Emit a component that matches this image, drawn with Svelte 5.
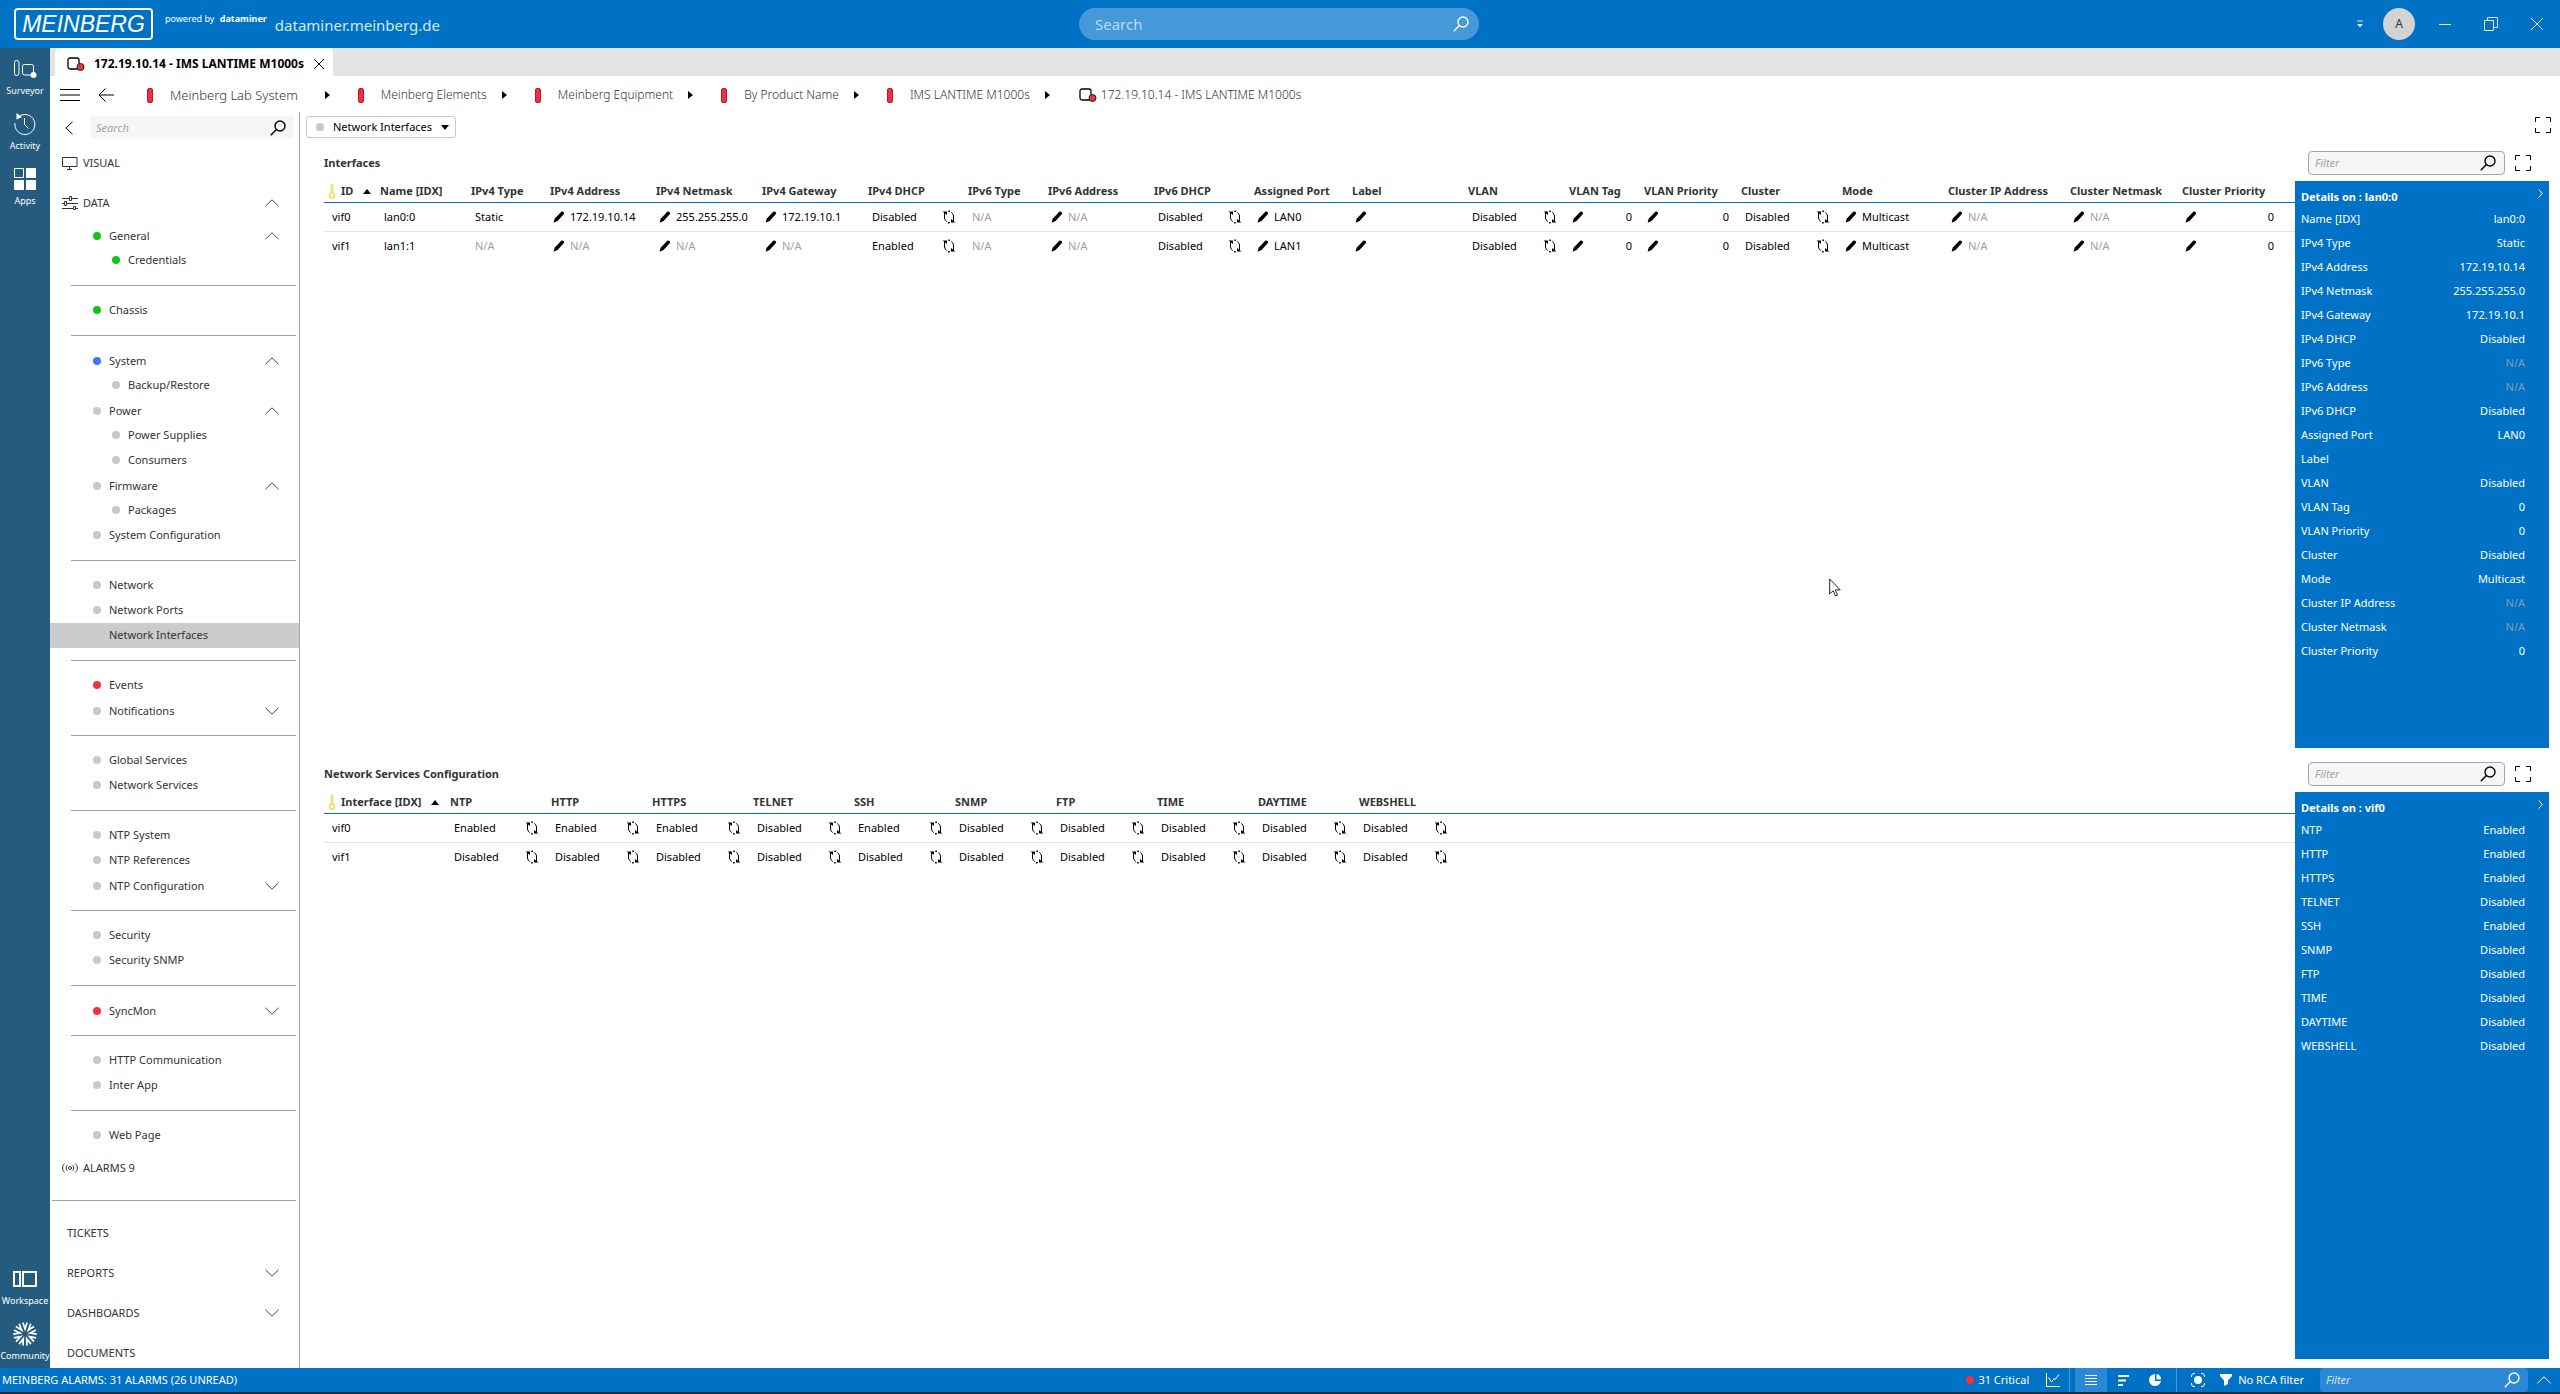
<script>
	let selected = $state('Network Interfaces');

	const crumbs = [
		{ label: 'Meinberg Lab System', large: true },
		{ label: 'Meinberg Elements' },
		{ label: 'Meinberg Equipment' },
		{ label: 'By Product Name' },
		{ label: 'IMS LANTIME M1000s' }
	];

	// null is a divider
	const pages = [
		{ label: 'General', color: 'green', open: true },
		{ label: 'Credentials', color: 'green', child: true },
		null,
		{ label: 'Chassis', color: 'green' },
		null,
		{ label: 'System', color: 'blue', open: true },
		{ label: 'Backup/Restore', child: true },
		{ label: 'Power', open: true },
		{ label: 'Power Supplies', child: true },
		{ label: 'Consumers', child: true },
		{ label: 'Firmware', open: true },
		{ label: 'Packages', child: true },
		{ label: 'System Configuration' },
		null,
		{ label: 'Network' },
		{ label: 'Network Ports' },
		{ label: 'Network Interfaces' },
		null,
		{ label: 'Events', color: 'red' },
		{ label: 'Notifications', open: false },
		null,
		{ label: 'Global Services' },
		{ label: 'Network Services' },
		null,
		{ label: 'NTP System' },
		{ label: 'NTP References' },
		{ label: 'NTP Configuration', open: false },
		null,
		{ label: 'Security' },
		{ label: 'Security SNMP' },
		null,
		{ label: 'SyncMon', color: 'red', open: false },
		null,
		{ label: 'HTTP Communication' },
		{ label: 'Inter App' },
		null,
		{ label: 'Web Page' }
	];

	const cards = [
		{ label: 'TICKETS' },
		{ label: 'REPORTS', more: true },
		{ label: 'DASHBOARDS', more: true },
		{ label: 'DOCUMENTS' }
	];

	// kind: edit = pencil in front, toggle = refresh at the end, number = pencil + right aligned
	const interfaceColumns = [
		{ label: 'ID', width: 52, key: true },
		{ label: 'Name [IDX]', width: 91 },
		{ label: 'IPv4 Type', width: 79 },
		{ label: 'IPv4 Address', width: 106, kind: 'edit' },
		{ label: 'IPv4 Netmask', width: 106, kind: 'edit' },
		{ label: 'IPv4 Gateway', width: 106, kind: 'edit' },
		{ label: 'IPv4 DHCP', width: 100, kind: 'toggle' },
		{ label: 'IPv6 Type', width: 80 },
		{ label: 'IPv6 Address', width: 106, kind: 'edit' },
		{ label: 'IPv6 DHCP', width: 100, kind: 'toggle' },
		{ label: 'Assigned Port', width: 98, kind: 'edit' },
		{ label: 'Label', width: 116, kind: 'edit' },
		{ label: 'VLAN', width: 101, kind: 'toggle' },
		{ label: 'VLAN Tag', width: 75, kind: 'number' },
		{ label: 'VLAN Priority', width: 97, kind: 'number' },
		{ label: 'Cluster', width: 101, kind: 'toggle' },
		{ label: 'Mode', width: 106, kind: 'edit' },
		{ label: 'Cluster IP Address', width: 122, kind: 'edit' },
		{ label: 'Cluster Netmask', width: 112, kind: 'edit' },
		{ label: 'Cluster Priority', width: 104, kind: 'number' }
	];

	const interfaceRows = [
		['vif0', 'lan0:0', 'Static', '172.19.10.14', '255.255.255.0', '172.19.10.1', 'Disabled', 'N/A', 'N/A', 'Disabled', 'LAN0', '', 'Disabled', '0', '0', 'Disabled', 'Multicast', 'N/A', 'N/A', '0'],
		['vif1', 'lan1:1', 'N/A', 'N/A', 'N/A', 'N/A', 'Enabled', 'N/A', 'N/A', 'Disabled', 'LAN1', '', 'Disabled', '0', '0', 'Disabled', 'Multicast', 'N/A', 'N/A', '0']
	];

	const serviceColumns = [
		{ label: 'Interface [IDX]', width: 122, key: true },
		...['NTP', 'HTTP', 'HTTPS', 'TELNET', 'SSH', 'SNMP', 'FTP', 'TIME', 'DAYTIME', 'WEBSHELL'].map(
			(label) => ({ label, width: 101, kind: 'toggle' })
		)
	];

	const serviceRows = [
		['vif0', 'Enabled', 'Enabled', 'Enabled', 'Disabled', 'Enabled', 'Disabled', 'Disabled', 'Disabled', 'Disabled', 'Disabled'],
		['vif1', 'Disabled', 'Disabled', 'Disabled', 'Disabled', 'Disabled', 'Disabled', 'Disabled', 'Disabled', 'Disabled', 'Disabled']
	];

	const sections = [
		{ id: 'interfaces', title: 'Interfaces', subject: 'lan0:0', columns: interfaceColumns, rows: interfaceRows },
		{ id: 'services', title: 'Network Services Configuration', subject: 'vif0', columns: serviceColumns, rows: serviceRows }
	];

	const rays = Array.from({ length: 9 }, (_, i) => i * 40);
</script>

{#snippet magnifier()}
	<svg class="magnifier" viewBox="0 0 16 16" width="16" height="16" aria-hidden="true">
		<circle cx="10" cy="6" r="5" />
		<path d="M6.4 9.6 .8 15.2" />
	</svg>
{/snippet}

{#snippet chevron(up)}
	<svg class="chevron" viewBox="0 0 14 8" width="14" height="8" aria-hidden="true">
		<path d={up ? 'M.5 7.2 7 .8l6.5 6.4' : 'M.5.8 7 7.2 13.5.8'} />
	</svg>
{/snippet}

{#snippet expand()}
	<svg class="expand" viewBox="0 0 16 16" width="16" height="16" aria-hidden="true">
		<path d="M.5 5V.5H5M11 .5h4.5V5M15.5 11v4.5H11M5 15.5H.5V11" />
	</svg>
{/snippet}

{#snippet element()}
	<svg class="element" viewBox="0 0 18 14" width="18" height="14" aria-hidden="true">
		<rect x="1" y="1" width="11" height="11" rx="2" />
		<circle cx="13.5" cy="10" r="3.5" />
	</svg>
{/snippet}

{#snippet pencil()}
	<svg class="pencil" viewBox="0 0 12 12" width="12" height="12" aria-hidden="true">
		<path d="M8.3.8C9.4-.2 11.9 1.4 10.9 2.9L4.6 9.9.6 11.7 1.6 7.7z" />
	</svg>
{/snippet}

{#snippet refresh()}
	<svg class="refresh" viewBox="0 0 14 14" width="14" height="14" aria-hidden="true">
		<path class="line" d="M2.5 3v5q0 2 2.3 3.6M11.5 11V6q0-2-2.3-3.6" />
		<path d="M.5 1.5h4.5v3.5zM13.5 12.5H9V9z" />
		<path d="M6.3.5h1.6v1.6H6.3zM6.1 11.9h1.6v1.6H6.1z" />
	</svg>
{/snippet}

<div class="app">
	<header class="titlebar">
		<div class="brand">
			<span class="logo">MEINBERG</span>
			<span class="powered">powered by <b>dataminer</b></span>
			<span class="host">dataminer.meinberg.de</span>
		</div>
		<div class="global-search">
			<input type="text" placeholder="Search" aria-label="Search" />
			{@render magnifier()}
		</div>
		<div class="window-controls">
			<button class="quick" aria-label="Quick menu">
				<svg viewBox="0 0 6 8" width="6" height="8"><path d="M0 .5h6v1H0zM0 4h6L3 7.5z" /></svg>
			</button>
			<button class="avatar">A</button>
			<button aria-label="Minimize">
				<svg viewBox="0 0 14 14" width="14" height="14"><path d="M1 7.5h12" /></svg>
			</button>
			<button aria-label="Restore">
				<svg viewBox="0 0 14 14" width="14" height="14"><path d="M.5 3.5h9v10h-9zM3.5 3.5v-3h10v10h-4" /></svg>
			</button>
			<button aria-label="Close">
				<svg viewBox="0 0 14 14" width="14" height="14"><path d="m1 1 12 12M13 1 1 13" /></svg>
			</button>
		</div>
	</header>

	<div class="body">
		<nav class="rail" aria-label="Main">
			<button>
				<svg viewBox="0 0 24 24" width="24" height="24">
					<rect x="1.5" y="3.5" width="4.5" height="15" rx="2.2" />
					<rect x="9.5" y="7.5" width="11" height="10.5" rx="2" />
					<circle class="solid" cx="20.5" cy="18" r="3" />
				</svg>
				Surveyor
			</button>
			<button>
				<svg viewBox="0 0 24 24" width="24" height="24">
					<path d="M5.5 4.8A10 10 0 1 1 2 11M11.5 6v6.5l4 4" />
					<path class="solid" d="M3.5 1v6.5L9 5z" />
				</svg>
				Activity
			</button>
			<button>
				<svg viewBox="0 0 24 24" width="24" height="24">
					<rect x="1.5" y="1.5" width="9" height="9" />
					<path class="solid" d="M13 1h10v10H13zM1 13h10v10H1zM13 13h10v10H13z" />
				</svg>
				Apps
			</button>
			<button class="push">
				<svg viewBox="0 0 24 24" width="24" height="24">
					<rect class="thick" x="1" y="5" width="6" height="14" />
					<rect class="thick" x="10" y="5" width="13" height="14" />
				</svg>
				Workspace
			</button>
			<button>
				<svg viewBox="0 0 28 28" width="26" height="24">
					{#each rays as angle}
						<path class="thick" transform="rotate({angle} 14 14)" d="M11.500.5 14 8l2.500-7.500" />
					{/each}
				</svg>
				Community
			</button>
		</nav>

		<div class="workspace">
			<div class="tabs">
				<div class="tab">
					{@render element()}
					<span>172.19.10.14 - IMS LANTIME M1000s</span>
					<button aria-label="Close tab">
						<svg viewBox="0 0 12 12" width="12" height="12"><path d="m1 1 10 10M11 1 1 11" /></svg>
					</button>
				</div>
			</div>

			<div class="crumbs">
				<button aria-label="Menu">
					<svg viewBox="0 0 20 12" width="20" height="12"><path d="M0 .5h20M0 6h20M0 11.5h20" /></svg>
				</button>
				<button class="back" aria-label="Back">
					<svg viewBox="0 0 16 14" width="16" height="14"><path d="M16 7H1M7.5.5 1 7l6.5 6.5" /></svg>
				</button>
				{#each crumbs as crumb}
					<a href="#view" class:large={crumb.large}><i class="level"></i>{crumb.label}</a>
					<svg class="next" viewBox="0 0 5 8" width="5" height="8"><path d="M0 0v8l5-4z" /></svg>
				{/each}
				<a href="#element" class="current">{@render element()}172.19.10.14 - IMS LANTIME M1000s</a>
			</div>

			<div class="columns">
				<nav class="pages" aria-label="Card pages">
					<div class="page-search">
						<button aria-label="Collapse">
							<svg viewBox="0 0 8 14" width="8" height="14"><path d="M7.5.8 1 7l6.5 6.2" /></svg>
						</button>
						<div class="field">
							<input type="text" placeholder="Search" aria-label="Search pages" />
							{@render magnifier()}
						</div>
					</div>

					<button class="card">
						<svg viewBox="0 0 16 14" width="16" height="14"><path d="M.5 1.5h14.5v9H.5zM7.5 10.5v2.5M5 13.5h5" /></svg>
						VISUAL
					</button>
					<button class="card">
						<svg viewBox="0 0 16 14" width="16" height="14">
							<path d="M0 2.5h7M10 2.5h6M0 7.5h2M5 7.5h11M0 12.5h11M14 12.5h2M7.5.5h2v4h-2zM2.5 5.5h2v4h-2zM11.5 10.5h2v3h-2z" />
						</svg>
						DATA
						{@render chevron(true)}
					</button>

					{#each pages as page}
						{#if page}
							<button
								class="page"
								class:child={page.child}
								class:group={page.open !== undefined}
								class:selected={selected === page.label}
								onclick={() => (selected = page.label)}
							>
								<i class="dot {page.color ?? 'gray'}"></i>
								{page.label}
								{#if page.open !== undefined}{@render chevron(page.open)}{/if}
							</button>
						{:else}
							<div class="divider"></div>
						{/if}
					{/each}

					<button class="card">
						<svg viewBox="0 0 16 14" width="16" height="14">
							<circle cx="8" cy="7" r="1.5" />
							<path d="M5.2 4.2c-1.4 1.7-1.4 3.9 0 5.6M10.8 4.2c1.4 1.7 1.4 3.9 0 5.6M2.5 2.5C0 5 0 9 2.5 11.5M13.5 2.5C16 5 16 9 13.5 11.5" />
						</svg>
						ALARMS 9
					</button>
					<div class="divider wide"></div>
					{#each cards as card}
						<button class="card plain">
							{card.label}
							{#if card.more}{@render chevron(false)}{/if}
						</button>
					{/each}
				</nav>

				<main>
					<div class="toolbar">
						<button class="page-picker">
							<i class="dot gray"></i>
							Network Interfaces
							<svg viewBox="0 0 8 5" width="8" height="5"><path d="M0 0h8L4 5z" /></svg>
						</button>
						<button class="full" aria-label="Full screen">{@render expand()}</button>
					</div>

					{#each sections as section (section.id)}
						<section>
							<div class="section-head">
								<h2>{section.title}</h2>
								<div class="field">
									<input type="text" placeholder="Filter" aria-label="Filter {section.title}" />
									{@render magnifier()}
								</div>
								<button aria-label="Expand {section.title}">{@render expand()}</button>
							</div>
							<div class="section-body">
								<div class="grid">
									<table>
										<colgroup>
											{#each section.columns as column}
												<col style="width: {column.width}px" />
											{/each}
											<col />
										</colgroup>
										<thead>
											<tr>
												{#each section.columns as column}
													<th>
														{#if column.key}
															<div>
																<svg class="key-icon" viewBox="0 0 8 16" width="8" height="16">
																	<path d="M2.5 1.5Q4-.5 5.5 1.5V10h-3z" />
																	<circle cx="4" cy="12.5" r="2.5" />
																</svg>
																{column.label}
																<svg class="sort" viewBox="0 0 8 5" width="8" height="5"><path d="M0 5h8L4 0z" /></svg>
															</div>
														{:else}
															{column.label}
														{/if}
													</th>
												{/each}
												<td></td>
											</tr>
										</thead>
										<tbody>
											{#each section.rows as row}
												<tr>
													{#each row as value, i}
														<td class:na={value === 'N/A'}>
															<div class={section.columns[i].kind}>
																{#if ['edit', 'number'].includes(section.columns[i].kind)}{@render pencil()}{/if}
																<span>{value}</span>
																{#if section.columns[i].kind === 'toggle'}{@render refresh()}{/if}
															</div>
														</td>
													{/each}
													<td></td>
												</tr>
											{/each}
										</tbody>
									</table>
								</div>
								<aside>
									<div class="aside-head">
										<h3>Details on : {section.subject}</h3>
										<button aria-label="Hide details">
											<svg viewBox="0 0 5 9" width="5" height="9"><path d="m.8.5 3.4 4-3.4 4" /></svg>
										</button>
									</div>
									<dl>
										{#each section.columns.slice(1) as column, i}
											<div>
												<dt>{column.label}</dt>
												<dd class:na={section.rows[0][i + 1] === 'N/A'}>{section.rows[0][i + 1]}</dd>
											</div>
										{/each}
									</dl>
								</aside>
							</div>
						</section>
					{/each}
				</main>
			</div>
		</div>
	</div>

	<footer>
		<span class="summary">MEINBERG ALARMS: 31 ALARMS (26 UNREAD)</span>
		<button class="critical"><i class="dot red"></i>31 Critical</button>
		<button class="tool" aria-label="Trend">
			<svg viewBox="0 0 14 14" width="14" height="14"><path d="M.5 0v13.5H14M2.5 4.5 5.5 9l2.5-3.5L9 6.5 13 1.5" /></svg>
		</button>
		<span class="bar"></span>
		<button class="tool active" aria-label="List">
			<svg viewBox="0 0 14 14" width="14" height="14"><path d="M1 2.5h12M1 5.5h12M1 8.5h12M1 11.5h12" /></svg>
		</button>
		<button class="tool" aria-label="Sort">
			<svg viewBox="0 0 14 14" width="14" height="14"><path class="solid" d="M2 2h11v2H2zM2 6.5h8v2H2zM2 11h5v2H2z" /></svg>
		</button>
		<button class="tool" aria-label="Distribution">
			<svg viewBox="0 0 14 14" width="14" height="14"><path class="solid" d="M7 1a6 6 0 1 0 6 7H7z" /><path class="solid" d="M8.5 1v5.5H13A5 5 0 0 0 8.5 1z" /></svg>
		</button>
		<span class="bar"></span>
		<button class="tool" aria-label="Focus">
			<svg viewBox="0 0 14 14" width="14" height="14">
				<circle class="solid" cx="7" cy="7" r="4" />
				<path d="M.5 4V3Q.5.5 3 .5h1M10 .5h1q2.5 0 2.5 2.5v1M13.5 10v1q0 2.5-2.5 2.5h-1M4 13.5H3Q.5 13.5.5 11v-1" />
			</svg>
		</button>
		<button class="rca">
			<svg viewBox="0 0 12 12" width="12" height="12"><path class="solid" d="M0 0h12v2L8 6.5V10l-4 2V6.5L0 2z" /></svg>
			No RCA filter
		</button>
		<div class="footer-filter">
			<input type="text" placeholder="Filter" aria-label="Filter alarms" />
			{@render magnifier()}
		</div>
		<button class="raise" aria-label="Show alarm console">{@render chevron(true)}</button>
	</footer>

	<svg class="pointer" viewBox="0 0 12 19" width="12" height="19" aria-hidden="true">
		<path d="M.7 1v15l3.5-3.3 2.3 5.3 2-.9-2.2-5.2h4.9z" />
	</svg>
</div>

<style>
	:global(body) {
		margin: 0;
	}

	.app {
		--blue: #0072c6;
		--text: #333;
		height: 100vh;
		display: flex;
		flex-direction: column;
		overflow: hidden;
		font-family: 'Noto Sans', 'Open Sans', sans-serif;
		font-size: 11px;
		line-height: 16px;
		color: var(--text);
		background: #fff;
	}

	button {
		padding: 0;
		border: 0;
		background: none;
		color: inherit;
		font: inherit;
		text-align: left;
		cursor: pointer;
	}

	button svg {
		display: block;
	}

	input {
		flex: 1;
		min-width: 0;
		padding: 0;
		border: 0;
		outline: 0;
		background: none;
		color: inherit;
		font: inherit;
	}

	a {
		color: inherit;
		text-decoration: none;
	}

	svg {
		flex: none;
		fill: none;
		stroke: currentColor;
	}

	h2,
	h3,
	dl,
	dd {
		margin: 0;
		font-size: inherit;
	}

	.magnifier {
		stroke-width: 1.4;
	}

	.dot {
		flex: none;
		width: 8px;
		height: 8px;
		border-radius: 50%;
	}

	.gray {
		background: #c8c8c8;
	}

	.green {
		background: #13c613;
	}

	.blue {
		background: #3d78fa;
	}

	.red {
		background: #f5303e;
	}

	/* title bar */
	.titlebar {
		flex: none;
		display: flex;
		justify-content: space-between;
		align-items: center;
		height: 48px;
		background: var(--blue);
		color: #fff;
	}

	.brand,
	.window-controls {
		flex: 1;
		display: flex;
		align-items: center;
	}

	.brand {
		padding-left: 14px;
	}

	.logo {
		box-sizing: border-box;
		width: 139px;
		height: 32px;
		border: 2px solid #fff;
		border-radius: 4px;
		font: italic 23px/28px 'Liberation Sans', sans-serif;
		text-align: center;
	}

	.powered {
		margin: 0 8px 10px 12px;
		font-size: 9px;
	}

	.powered b {
		margin-left: 3px;
	}

	.host {
		padding-top: 2px;
		font-size: 15px;
		color: #d4e6f5;
	}

	.global-search {
		box-sizing: border-box;
		display: flex;
		align-items: center;
		width: 400px;
		height: 32px;
		padding: 0 10px 0 16px;
		border-radius: 16px;
		background: #4599d8;
		font-size: 15px;
	}

	.global-search input::placeholder {
		color: #b9d9f1;
		opacity: 1;
	}

	.window-controls {
		justify-content: flex-end;
		gap: 32px;
		padding-right: 16px;
	}

	.window-controls button {
		color: #e6e6e6;
	}

	.window-controls .quick {
		margin-right: -12px;
	}

	.quick svg {
		fill: currentColor;
		stroke: none;
	}

	.window-controls .avatar {
		width: 32px;
		height: 32px;
		margin-right: -9px;
		border-radius: 50%;
		background: #d3d3d3;
		color: #333;
		font-size: 12px;
		text-align: center;
	}

	.body {
		flex: 1;
		min-height: 0;
		display: flex;
	}

	/* left rail */
	.rail {
		flex: none;
		width: 50px;
		display: flex;
		flex-direction: column;
		background: #265b80;
		color: #fff;
		font-size: 9px;
		line-height: 20px;
	}

	.rail button {
		height: 55px;
		display: flex;
		flex-direction: column;
		align-items: center;
		box-sizing: border-box;
		padding-top: 9px;
	}

	.rail .push {
		margin-top: auto;
	}

	.solid {
		fill: currentColor;
		stroke: none;
	}

	.thick {
		stroke-width: 2;
	}

	.workspace {
		flex: 1;
		min-width: 0;
		display: flex;
		flex-direction: column;
	}

	/* tabs */
	.tabs {
		flex: none;
		display: flex;
		height: 28px;
		padding-left: 5px;
		background: #e4e4e4;
	}

	.tab {
		display: flex;
		align-items: center;
		padding: 3px 8px 0 12px;
		border-radius: 5px 5px 0 0;
		background: #fff;
		color: #000;
		font-size: 12px;
		font-weight: 700;
	}

	.tab span {
		margin: 0 9px 0 9px;
	}

	.element rect {
		stroke: #000;
		stroke-width: 1.3;
	}

	.element circle {
		fill: #f03040;
		stroke: #222;
		stroke-width: 1;
	}

	/* breadcrumbs */
	.crumbs {
		flex: none;
		display: flex;
		align-items: center;
		height: 36px;
		padding: 2px 0 0 10px;
		box-sizing: border-box;
		font-size: 12px;
		font-weight: 300;
	}

	.crumbs button {
		color: #000;
	}

	.crumbs .back {
		margin: 0 33px 0 18px;
	}

	.crumbs a {
		display: flex;
		align-items: center;
	}

	.crumbs .large {
		margin-right: 12px;
		font-size: 13px;
	}

	.level {
		box-sizing: border-box;
		width: 6px;
		height: 15px;
		margin-right: 17px;
		border: 1px solid #b02030;
		border-radius: 2px;
		background: #f03040;
	}

	.next {
		margin: 0 28px 0 15px;
		fill: #000;
		stroke: none;
	}

	.current .element {
		margin: 0 4px 0 1px;
	}

	.columns {
		flex: 1;
		min-height: 0;
		display: flex;
	}

	/* card pages */
	.pages {
		flex: none;
		width: 249px;
		display: flex;
		flex-direction: column;
		border-right: 1px solid #a6a6a6;
		overflow: hidden;
	}

	.page-search {
		flex: none;
		display: flex;
		align-items: center;
		height: 31px;
		padding: 0 5px 0 15px;
		gap: 17px;
		color: #000;
	}

	.field {
		box-sizing: border-box;
		display: flex;
		align-items: center;
		height: 23px;
		border-radius: 3px;
		background: #f6f6f6;
		color: #000;
	}

	.field input::placeholder {
		color: #a3a3a3;
		font-style: italic;
		opacity: 1;
	}

	.page-search .field {
		flex: 1;
		padding: 0 8px 0 6px;
	}

	.card,
	.page {
		flex: none;
		display: flex;
		align-items: center;
	}

	.card {
		height: 40px;
		padding: 0 20px 0 12px;
		gap: 5px;
	}

	.card.plain {
		padding-left: 17px;
	}

	.page {
		box-sizing: border-box;
		height: 25px;
		padding: 0 20px 2px 43px;
		gap: 8px;
	}

	.page.child {
		padding-left: 62px;
	}

	.page.group {
		padding-bottom: 0;
	}

	.page.selected {
		background: #cbcbcb;
	}

	.selected .dot {
		background: none;
	}

	.pages .chevron {
		margin-left: auto;
		stroke: #444;
	}

	.divider {
		flex: none;
		height: 1px;
		margin: 12px 3px 12px 21px;
		background: #a0a0a0;
	}

	.divider.wide {
		margin-left: 2px;
	}

	/* page content */
	main {
		flex: 1;
		min-width: 0;
		display: flex;
		flex-direction: column;
	}

	.toolbar {
		flex: none;
		display: flex;
		justify-content: space-between;
		align-items: center;
		box-sizing: border-box;
		height: 34px;
		padding: 0 9px 4px 6px;
		color: #000;
	}

	.full {
		align-self: flex-start;
		padding-top: 5px;
	}

	.page-picker {
		box-sizing: border-box;
		display: flex;
		align-items: center;
		height: 22px;
		padding: 0 6px 0 9px;
		gap: 9px;
		border: 1px solid #c8c8c8;
		border-radius: 3px;
	}

	.page-picker svg,
	.sort {
		fill: #000;
		stroke: none;
	}

	section {
		flex: 1;
		min-height: 0;
		display: flex;
		flex-direction: column;
		box-sizing: border-box;
		padding: 5px 11px 9px 24px;
	}

	.section-head {
		display: flex;
		align-items: center;
		height: 24px;
		padding-right: 18px;
		margin-bottom: 6px;
		gap: 10px;
		color: #000;
	}

	.section-head h2 {
		flex: 1;
		color: var(--text);
	}

	.section-head .field {
		width: 197px;
		height: 24px;
		padding: 0 8px 0 6px;
		border: 1px solid #a6a6a6;
		border-radius: 4px;
	}

	.section-body {
		flex: 1;
		min-height: 0;
		display: flex;
	}

	.grid {
		flex: 1;
		min-width: 0;
		overflow: hidden;
	}

	table {
		width: 100%;
		table-layout: fixed;
		border-collapse: collapse;
		white-space: nowrap;
		color: #000;
	}

	th,
	td {
		box-sizing: border-box;
		padding: 0 8px;
	}

	th {
		height: 21px;
		padding: 0 0 0 4px;
		color: var(--text);
		text-align: left;
	}

	thead tr {
		border-bottom: 1px solid var(--blue);
	}

	th div,
	td div {
		display: flex;
		align-items: center;
	}

	th div {
		gap: 5px;
	}

	.key-icon {
		stroke: #efe27a;
		stroke-width: 2;
	}

	.key-icon path {
		fill: #efe27a;
		stroke: none;
	}

	.sort {
		margin-left: 5px;
	}

	td {
		height: 29px;
	}

	thead td {
		height: 21px;
	}

	tbody tr:not(:last-child) {
		border-bottom: 1px solid #e4e4e4;
	}

	td.na {
		color: #a0a0a0;
	}

	td .pencil {
		margin: 0 5px 0 -1px;
		fill: #000;
		stroke: none;
	}

	.toggle,
	.number {
		justify-content: space-between;
	}

	.refresh {
		fill: #000;
		stroke: none;
	}

	.refresh .line {
		fill: none;
		stroke: #000;
	}

	aside {
		flex: none;
		width: 254px;
		background: var(--blue);
		color: #fff;
	}

	.aside-head {
		display: flex;
		justify-content: space-between;
		padding: 8px 6px 2px;
	}

	.aside-head button {
		align-self: flex-start;
	}

	aside dl {
		padding: 0 24px 0 6px;
	}

	aside dl div {
		display: flex;
		justify-content: space-between;
		line-height: 24px;
	}

	aside dd.na {
		color: #8a9bb0;
	}

	/* alarm bar */
	footer {
		flex: none;
		display: flex;
		align-items: center;
		height: 24px;
		border-bottom: 2px solid #14303f;
		background: var(--blue);
		color: #fff;
	}

	.summary {
		flex: 1;
		padding-left: 2px;
	}

	.critical,
	.rca,
	.footer-filter,
	.tool,
	.raise {
		display: flex;
		align-items: center;
	}

	.critical {
		gap: 4px;
		margin-right: 8px;
	}

	.tool {
		justify-content: center;
		width: 32px;
		height: 24px;
	}

	.tool.active {
		background: #2b88d6;
	}

	.bar {
		width: 1px;
		height: 24px;
		margin-right: 5px;
		background: #4599d8;
	}

	.active ~ .bar {
		margin-left: 5px;
	}

	.rca {
		gap: 6px;
		margin: 0 16px 0 6px;
	}

	.footer-filter {
		box-sizing: border-box;
		width: 208px;
		height: 24px;
		padding: 0 8px 0 6px;
		border-radius: 3px;
		background: #2b88d6;
	}

	.footer-filter input::placeholder {
		color: #d4e6f5;
		font-style: italic;
		opacity: 1;
	}

	.raise {
		padding: 0 9px;
	}

	.pointer {
		position: absolute;
		left: 1829px;
		top: 578px;
	}

	.pointer path {
		fill: #fff;
		stroke: #223;
	}
</style>
